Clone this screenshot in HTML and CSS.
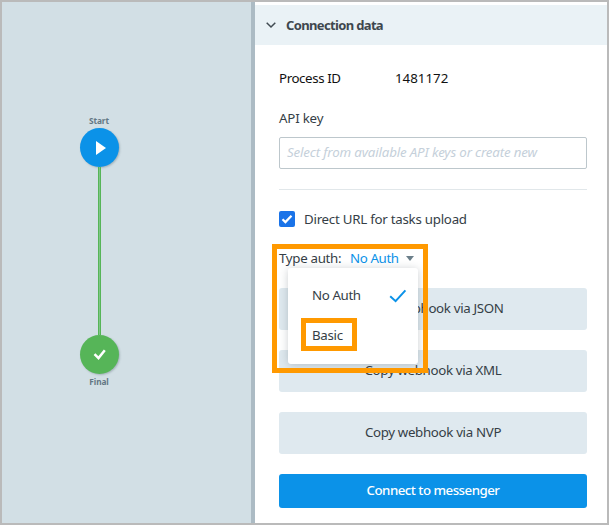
FILE: index.html
```html
<!DOCTYPE html>
<html lang="en">
<head>
<meta charset="utf-8">
<title>Connection data</title>
<link rel="stylesheet" href="styles.css">
</head>
<body>
<div class="app">
  <section class="canvas">
    <div class="flow">
      <span class="node-label">Start</span>
      <div class="node start"><svg width="39" height="39" viewBox="0 0 39 39"><path d="M16 13v14l10-7z" fill="#fff"/></svg></div>
      <div class="link"></div>
      <div class="node final"><svg width="39" height="39" viewBox="0 0 39 39"><path d="M14.5 19.1l4 4 6.3-7.8" fill="none" stroke="#fff" stroke-width="2.5"/></svg></div>
      <span class="node-label end">Final</span>
    </div>
  </section>
  <main class="panel">
    <header class="heading">
      <svg width="12" height="8" viewBox="0 0 12 8"><path d="M1.7 1.7L6 6l4.3-4.3" fill="none" stroke="#414b52" stroke-width="1.5"/></svg>
      <h1><span class="t-heading">Connection data</span></h1>
    </header>
    <div class="content">
      <div class="row process"><span class="key"><span class="t-process">Process ID</span></span><span class="t-number">1481172</span></div>
      <div class="row api"><span class="t-api">API key</span></div>
      <div class="input"><span class="t-input">Select from available API keys or create new</span></div>
      <hr>
      <div class="row direct">
        <span class="checkbox"><svg width="16" height="16" viewBox="0 0 16 16"><path d="M3.5 8.2l2.9 2.9 6.1-6.4" fill="none" stroke="#fff" stroke-width="2.2"/></svg></span>
        <span class="t-direct">Direct URL for tasks upload</span>
      </div>
      <div class="row auth">
        <span class="t-type">Type auth:</span><span class="selected t-noauth">No Auth</span><span class="caret"></span>
        <div class="highlight"></div>
        <div class="menu">
          <div class="option"><span class="t-noauth">No Auth</span><svg width="18" height="14" viewBox="0 0 18 14"><path d="M1.2 7.2l5.4 5L16.4 1.3" fill="none" stroke="#0b92e8" stroke-width="2"/></svg></div>
          <div class="option"><span class="t-basic">Basic</span><div class="option-highlight"></div></div>
        </div>
      </div>
      <div class="buttons">
        <div class="button"><span class="t-copy">Copy webhook via JSON</span></div>
        <div class="button"><span class="t-copy">Copy webhook via XML</span></div>
        <div class="button"><span class="t-copy">Copy webhook via NVP</span></div>
        <div class="button primary"><span class="t-connect">Connect to messenger</span></div>
      </div>
    </div>
  </main>
</div>
</body>
</html>
```

FILE: styles.css
```css
* { box-sizing: border-box; }
body { margin: 0; font: 13.3px/20px "Noto Sans", sans-serif; color: #353e46; }
.app { display: flex; width: 609px; height: 525px; border: 2px solid #bababa; overflow: hidden; background: #fff; }
.canvas { width: 253px; flex: none; background: #d2dfe5; border-right: 4px solid #acbbc4; }
.flow { width: 60px; margin-left: 67px; padding-top: 114px; display: flex; flex-direction: column; align-items: center; }
.node-label { font-size: 8.3px; line-height: 10px; height: 12px; font-weight: 700; color: #637784; letter-spacing: -.1px; }
.node-label.end { margin-top: 3px; }
.node { width: 39px; height: 39px; border-radius: 50%; flex: none; box-shadow: 1px 1px 2px rgba(60,80,90,.3); }
.node svg { display: block; }
.start { background: #0b92e8; }
.final { background: #56b558; }
.link { width: 3px; height: 168px; background: linear-gradient(90deg, #56b558 1px, #80c586 1px 2px, #56b558 2px); }
.panel { flex: 1; padding-top: 3px; }
.heading { height: 40px; background: #eaf2f6; display: flex; align-items: center; padding-left: 10px; gap: 9px; }
h1 { margin: 0; font-size: 13px; font-weight: 700; line-height: 20px; color: #3e474e; }
.content { padding: 23px 20px 0 24px; }
.row { display: flex; align-items: center; height: 20px; white-space: nowrap; }
.process { color: #111; }
.key { width: 116px; }
.api { margin-top: 20px; }
.input { margin-top: 9px; height: 32px; border: 1px solid #bdc7cc; border-radius: 2px; display: flex; align-items: center; padding: 0 0 2px 7px; white-space: nowrap; font-style: italic; color: #c5d0da; }
hr { height: 1px; border: 0; background: #e1e7ea; margin: 20px 0 19px; }
.direct { gap: 9px; }
.checkbox { width: 16px; height: 16px; background: #1a73e8; border-radius: 2px; }
.checkbox svg { display: block; }
.auth { margin-top: 19px; position: relative; }
.selected { color: #0b92e8; position: absolute; left: 71px; }
.caret { position: absolute; left: 127px; top: 8px; border: 4px solid transparent; border-top: 5px solid #6b7f8a; border-bottom: 0; }
.highlight { position: absolute; z-index: 3; left: -7px; top: -4px; width: 156px; height: 129px; border: 5px solid #ff9900; }
.menu { position: absolute; z-index: 2; left: 9px; top: 20px; width: 130px; height: 96px; padding-top: 8px; background: #fff; border-radius: 3px; box-shadow: 0 1px 8px rgba(50,65,75,.25); }
.option { position: relative; height: 40px; padding: 0 11px 0 24px; display: flex; align-items: center; justify-content: space-between; }
.option > span { padding-bottom: 2px; }
.option-highlight { position: absolute; left: 13px; top: 2px; width: 56px; height: 33px; border: 5px solid #ff9900; }
.buttons { margin-top: 20px; display: grid; gap: 20px; }
.button { height: 42px; padding-bottom: 2px; border-radius: 3px; background: #dfe9ef; display: flex; align-items: center; justify-content: center; }
.button.primary { height: 34px; background: #0b92e8; color: #fff; font-weight: 500; }
.t-heading { letter-spacing: -.65px; }
.t-process { letter-spacing: -.4px; }
.t-api { letter-spacing: -.2px; }
.t-input { letter-spacing: -.15px; }
.t-direct { letter-spacing: -.25px; }
.t-type { letter-spacing: -.3px; }
.t-noauth { letter-spacing: -.38px; }
.t-basic { letter-spacing: -.3px; }
.t-copy { letter-spacing: -.33px; }
.t-connect { letter-spacing: -.52px; }
```
